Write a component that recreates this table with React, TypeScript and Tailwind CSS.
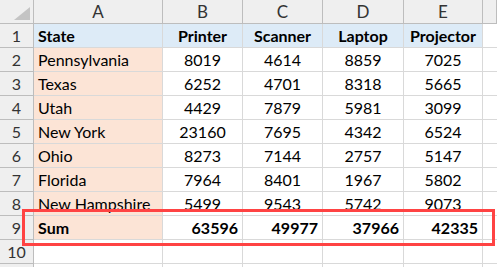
import React from "react";

const rows: [string, number, number, number, number][] = [
  ["Pennsylvania", 8019, 4614, 8859, 7025],
  ["Texas", 6252, 4701, 8318, 5665],
  ["Utah", 4429, 7879, 5981, 3099],
  ["New York", 23160, 7695, 4342, 6524],
  ["Ohio", 8273, 7144, 2757, 5147],
  ["Florida", 7964, 8401, 1967, 5802],
  ["New Hampshire", 5499, 9543, 5742, 9073],
];

const sums = [63596, 49977, 37966, 42335];

const cols = "grid grid-cols-[34px_129px_80px_80px_81px_79px_1fr]";
const cell = "h-6 border-r border-b border-[#d9d9d9] flex items-center overflow-hidden whitespace-nowrap";
const rowHead = "h-6 border-r border-b border-[#bdbdbd] bg-[#efefef] flex items-center justify-center text-[#333]";

export default function App() {
  return (
    <div
      className="relative w-[497px] h-[267px] overflow-hidden bg-white text-[16px] text-black"
      style={{ fontFamily: "Lato, 'Open Sans', sans-serif" }}
    >
      {/* column letters */}
      <div className={cols}>
        <div className="h-6 border-r border-b border-[#bdbdbd] bg-[#efefef] relative">
          <div className="absolute right-[3px] bottom-[3px] w-0 h-0 border-l-[16px] border-l-transparent border-b-[13px] border-b-[#c4c4c4]" />
        </div>
        {["A", "B", "C", "D", "E", ""].map((l, i) => (
          <div key={i} className="h-6 border-r border-b border-[#bdbdbd] bg-[#efefef] flex items-center justify-center text-[17px] text-[#333]">
            {l}
          </div>
        ))}
      </div>

      {/* row 1 headers */}
      <div className={cols}>
        <div className={rowHead}>1</div>
        <div className={`${cell} bg-[#ddebf7] font-bold pl-[4px]`}>State</div>
        {["Printer", "Scanner", "Laptop", "Projector"].map((h) => (
          <div key={h} className={`${cell} bg-[#ddebf7] font-bold justify-center`}>{h}</div>
        ))}
        <div className="h-6 border-b border-[#d9d9d9]" />
      </div>

      {rows.map((r, i) => (
        <div key={r[0]} className={cols}>
          <div className={rowHead}>{i + 2}</div>
          <div className={`${cell} bg-[#fce4d6] pl-[4px]`}>{r[0]}</div>
          {r.slice(1).map((v, j) => (
            <div key={j} className={`${cell} justify-center`}>{v}</div>
          ))}
          <div className="h-6 border-b border-[#d9d9d9]" />
        </div>
      ))}

      {/* sum row */}
      <div className={cols}>
        <div className={rowHead}>9</div>
        <div className={`${cell} bg-[#fce4d6] font-bold pl-[4px]`}>Sum</div>
        {sums.map((v) => (
          <div key={v} className={`${cell} font-bold justify-end pr-[4px]`}>{v}</div>
        ))}
        <div className="h-6 border-b border-[#d9d9d9]" />
      </div>

      {/* empty rows below */}
      <div className={cols}>
        <div className={rowHead}>10</div>
        {[0, 1, 2, 3, 4].map((j) => (
          <div key={j} className={cell} />
        ))}
        <div className="h-6 border-b border-[#d9d9d9]" />
      </div>
      <div className={cols}>
        <div className={rowHead} />
        {[0, 1, 2, 3, 4].map((j) => (
          <div key={j} className={cell} />
        ))}
        <div className="h-6" />
      </div>

      {/* highlight box */}
      <div className="absolute left-[22px] top-[209px] w-[473px] h-[37px] border-[3px] border-[#ff4343]" />
    </div>
  );
}
